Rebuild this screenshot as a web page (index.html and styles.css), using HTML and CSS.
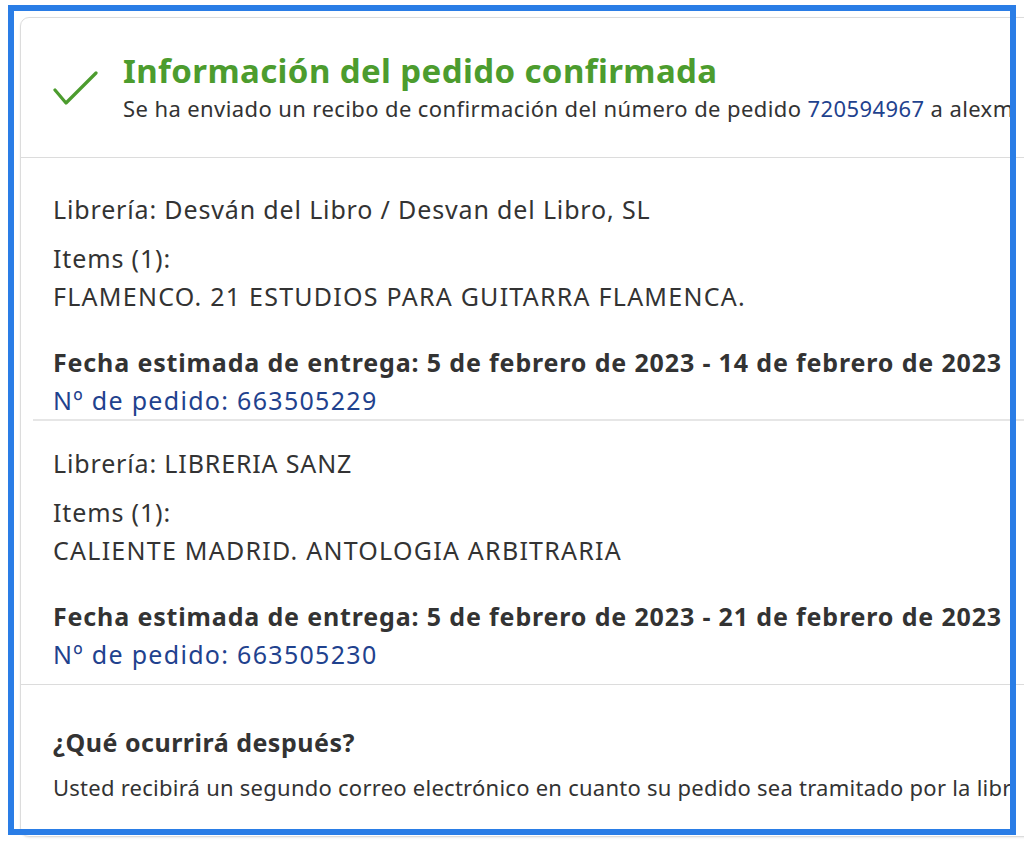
FILE: index.html
```html
<!DOCTYPE html>
<html lang="es">
<head>
<meta charset="utf-8">
<title>Información del pedido confirmada</title>
<link rel="stylesheet" href="styles.css">
</head>
<body>
<div class="card">
  <div class="header">
    <svg class="check" width="46" height="36" viewBox="0 0 46 36" aria-hidden="true">
      <polyline points="2,19 13,32 43,2" fill="none" stroke="#4c9c2e" stroke-width="3.2" stroke-linecap="round" stroke-linejoin="round"/>
    </svg>
    <div class="header-text">
      <h1 class="title">Información del pedido confirmada</h1>
      <p class="subtitle">Se ha enviado un recibo de confirmación del número de pedido <a class="link" href="#">720594967</a> a alexm</p>
    </div>
  </div>
  <div class="order order-first">
    <p class="line">Librería: Desván del Libro / Desvan del Libro, SL</p>
    <p class="line gap">Items (1):</p>
    <p class="line caps">FLAMENCO. 21 ESTUDIOS PARA GUITARRA FLAMENCA.</p>
    <p class="line bold gap-lg">Fecha estimada de entrega: 5 de febrero de 2023 - 14 de febrero de 2023</p>
    <p class="line num"><a class="link" href="#">Nº de pedido: 663505229</a></p>
  </div>
  <div class="order order-second">
    <p class="line">Librería: LIBRERIA SANZ</p>
    <p class="line gap">Items (1):</p>
    <p class="line caps">CALIENTE MADRID. ANTOLOGIA ARBITRARIA</p>
    <p class="line bold gap-lg">Fecha estimada de entrega: 5 de febrero de 2023 - 21 de febrero de 2023</p>
    <p class="line num"><a class="link" href="#">Nº de pedido: 663505230</a></p>
  </div>
  <div class="next">
    <h2 class="next-title">¿Qué ocurrirá después?</h2>
    <p class="next-text">Usted recibirá un segundo correo electrónico en cuanto su pedido sea tramitado por la libr</p>
  </div>
</div>
<div class="frame" aria-hidden="true"></div>
</body>
</html>
```

FILE: styles.css
```css
html, body {
  margin: 0;
  padding: 0;
  overflow: hidden;
  background: #ffffff;
}

body {
  font-family: "Noto Sans", "Open Sans", "Liberation Sans", sans-serif;
  color: #333333;
  width: 1024px;
  height: 844px;
  position: relative;
}

.card {
  margin: 17px 0 0 20px;
  width: 1140px;
  border: 1px solid #dcdcdc;
  border-radius: 9px;
  box-shadow: 0 1px 2px rgba(0, 0, 0, 0.08);
  white-space: nowrap;
}

.header {
  display: flex;
  align-items: flex-start;
  padding: 33px 0 34px 0;
  border-bottom: 1px solid #dcdcdc;
}

.check {
  margin: 20px 0 0 32px;
  flex: none;
}

.header-text {
  margin-left: 24px;
}

.title {
  margin: 0;
  font-size: 33px;
  line-height: 40px;
  font-weight: 700;
  letter-spacing: 0.4px;
  color: #4c9c2e;
}

.subtitle {
  margin: 2px 0 0 0;
  font-size: 22px;
  line-height: 30px;
  letter-spacing: 0.4px;
}

.link {
  color: #1f428e;
  text-decoration: none;
}

.order-first {
  margin-left: 12px;
  padding-left: 20px;
  padding-top: 32px;
  border-bottom: 2px solid #e6e6e6;
}

.order-second {
  padding-top: 23px;
  padding-bottom: 11px;
  padding-left: 32px;
  border-bottom: 1px solid #dcdcdc;
}

.line {
  margin: 0;
  font-size: 25px;
  line-height: 38px;
  letter-spacing: 0.85px;
}

.caps {
  letter-spacing: 1.25px;
}

.num {
  letter-spacing: 1.3px;
}

.gap {
  margin-top: 11px;
}

.gap-lg {
  margin-top: 28px;
}

.bold {
  font-weight: 700;
}

.next {
  padding: 38px 0 34px 32px;
}

.next-title {
  margin: 0;
  font-size: 25px;
  line-height: 38px;
  font-weight: 700;
  letter-spacing: 0.5px;
}

.next-text {
  margin: 11px 0 0 0;
  font-size: 22px;
  line-height: 30px;
  letter-spacing: 0.25px;
}

.frame {
  position: absolute;
  left: 8px;
  top: 5px;
  width: 996px;
  height: 818px;
  border: 6px solid #2a7de6;
  pointer-events: none;
}
```
